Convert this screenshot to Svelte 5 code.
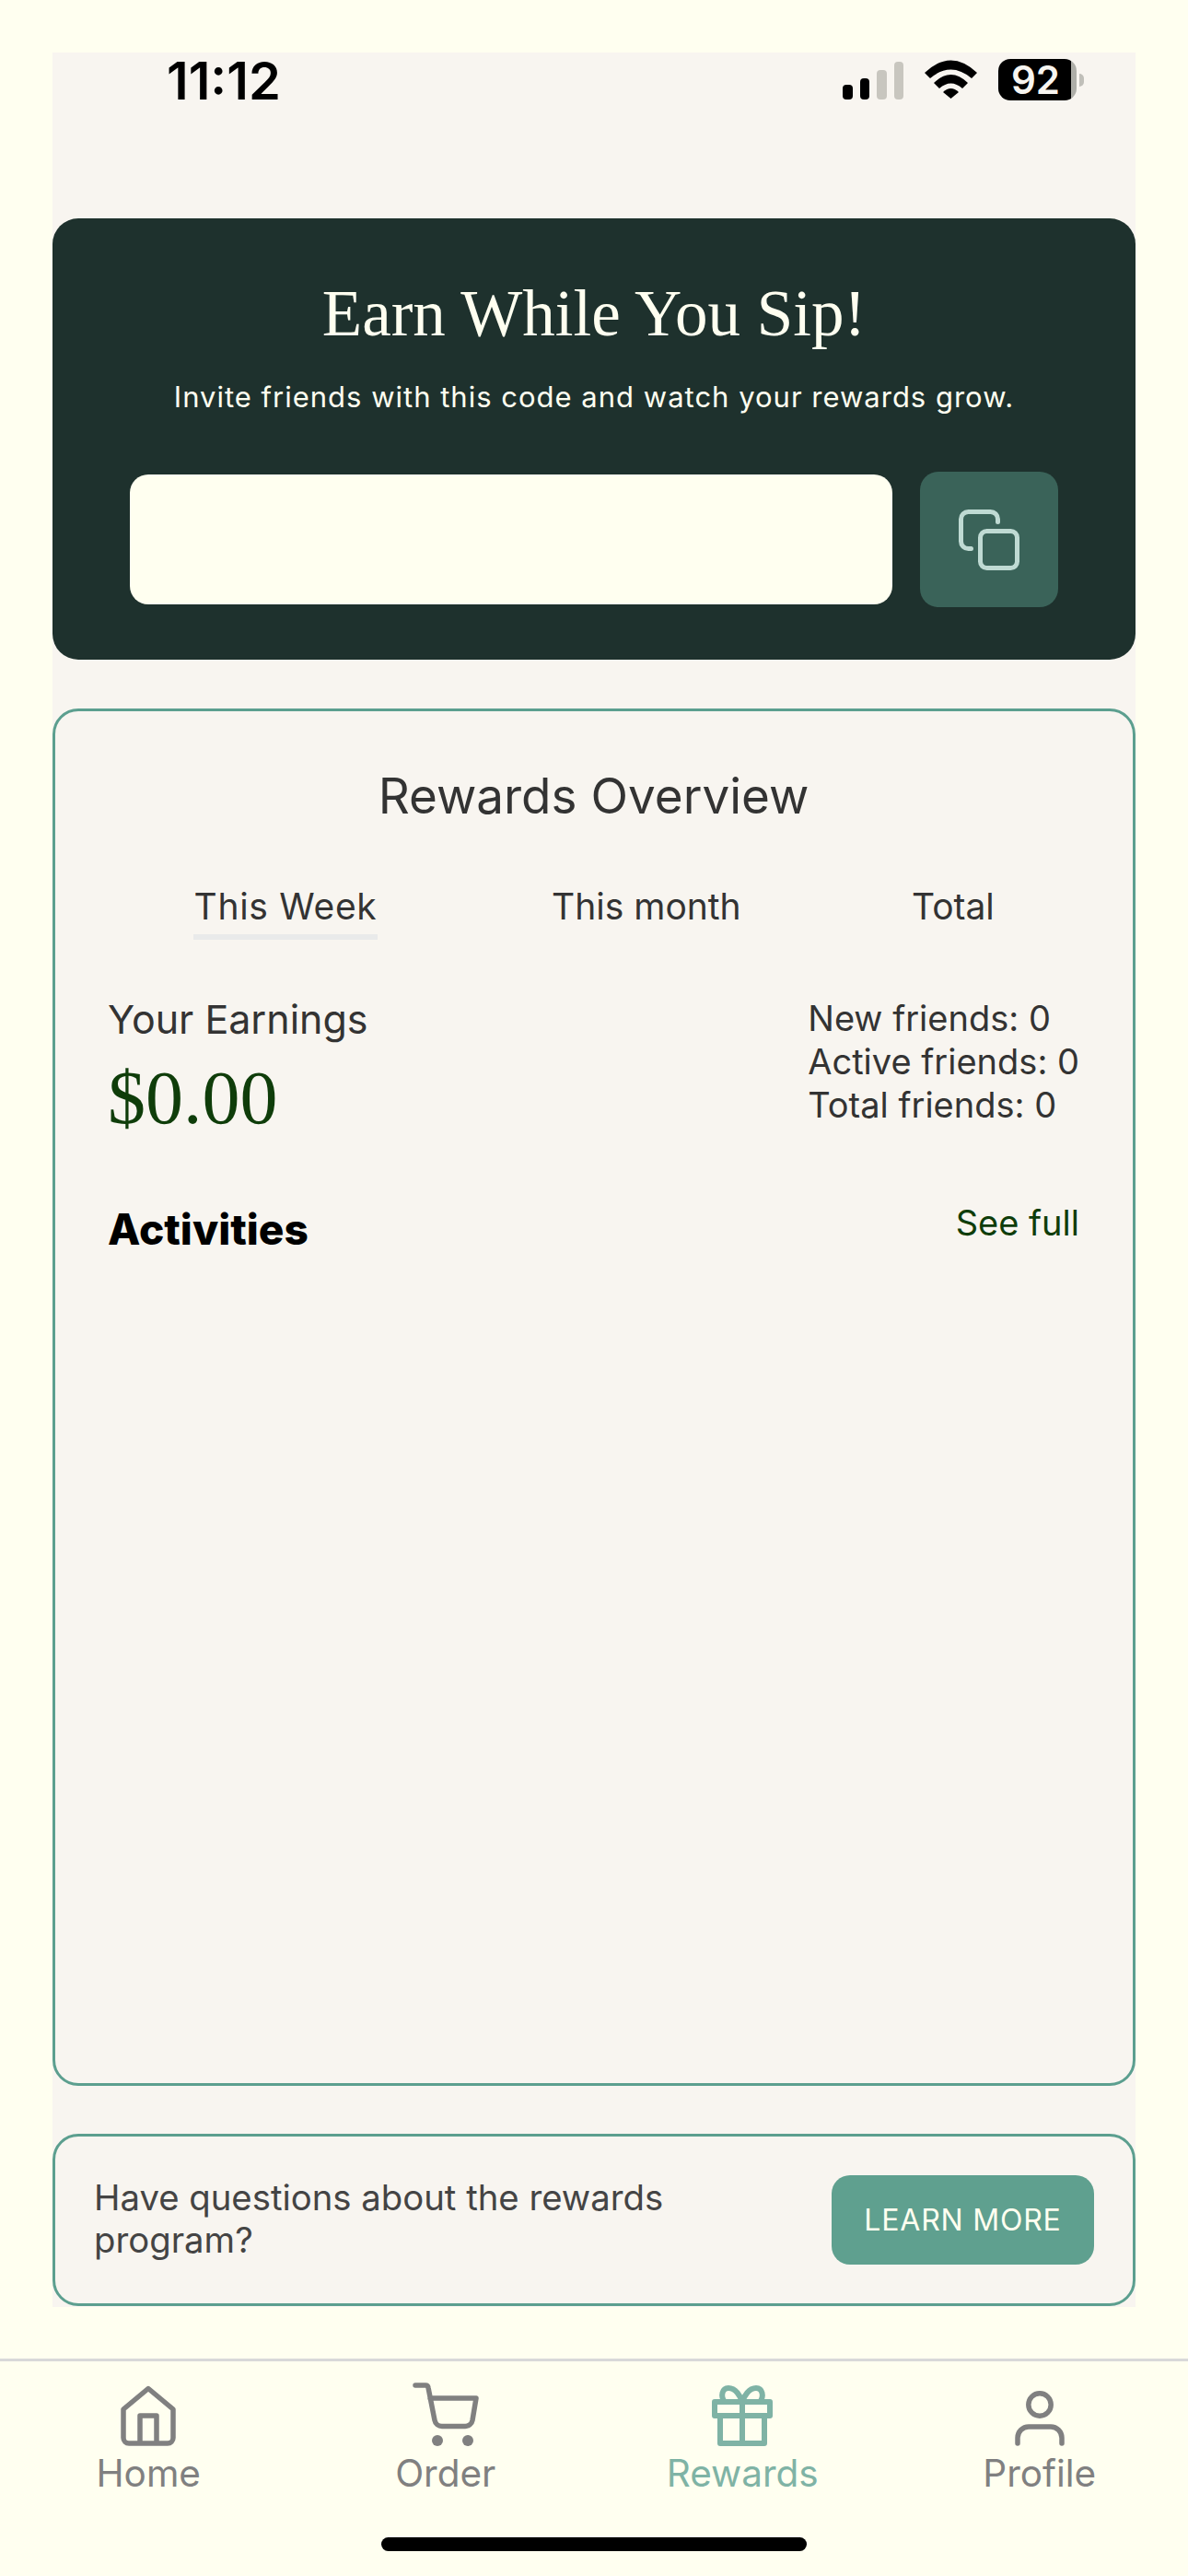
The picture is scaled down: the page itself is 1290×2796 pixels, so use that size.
<script>
  const tabs = ['This Week', 'This month', 'Total'];
  const friends = ['New friends: 0', 'Active friends: 0', 'Total friends: 0'];
</script>

<div class="page">
  <main class="sheet">
    <header class="status">
      <span class="time">11:12</span>
      <div class="indicators">
        <div class="signal">
          <i class="b1"></i><i class="b2"></i><i class="b3"></i><i class="b4"></i>
        </div>
        <svg class="wifi" width="57" height="42" viewBox="0 0 57 42">
          <path d="M0 14Q28.5-13 57 14L51 20Q28.5 1 6 20Z" />
          <path d="M10 25Q28.5 7 47 25L41 31Q28.5 20 16 31Z" />
          <path d="M20 35Q28.5 27 37 35L28.5 42Z" />
        </svg>
        <div class="battery"><div class="cell">92</div><div class="cap"></div></div>
      </div>
    </header>

    <section class="hero">
      <h1>Earn While You Sip!</h1>
      <p>Invite friends with this code and watch your rewards grow.</p>
      <div class="code-row">
        <div class="code"></div>
        <button class="copy" aria-label="Copy">
          <svg width="66" height="66" viewBox="0 0 66 66" fill="none" stroke="#bfdad3" stroke-width="5" stroke-linecap="round">
            <path d="M13.5 42.5h-3a8 8 0 0 1-8-8v-24a8 8 0 0 1 8-8h24a8 8 0 0 1 8 8v3" />
            <rect x="23.5" y="23.5" width="40" height="40" rx="7" />
          </svg>
        </button>
      </div>
    </section>

    <section class="overview">
      <h2>Rewards Overview</h2>
      <div class="tabs">
        {#each tabs as tab, i}
          <span class="tab" class:active={i === 0}>{tab}</span>
        {/each}
      </div>
      <div class="stats">
        <div class="earn">
          <div class="earn-label">Your Earnings</div>
          <div class="amount">$0.00</div>
        </div>
        <div class="friends">
          {#each friends as f}<div>{f}</div>{/each}
        </div>
      </div>
      <div class="activities">
        <h3>Activities</h3>
        <a href="#full">See full</a>
      </div>
    </section>

    <section class="question">
      <p>Have questions about the rewards program?</p>
      <button class="learn">LEARN MORE</button>
    </section>
  </main>

  <nav class="nav">
    <div class="item">
      <svg width="60" height="66" viewBox="0 0 60 66" fill="none" stroke="currentColor" stroke-width="5.5" stroke-linejoin="round">
        <path d="M3 26 30 3.5 57 26V57a6 6 0 0 1-6 6H9a6 6 0 0 1-6-6Z" />
        <path d="M21 63V33H39V63" />
      </svg>
      <span>Home</span>
    </div>
    <div class="item">
      <svg width="72" height="69" viewBox="0 0 72 69" fill="none" stroke="currentColor" stroke-width="5.5" stroke-linecap="round" stroke-linejoin="round">
        <path d="M3 3H14a3 3 0 0 1 3 2.5L24 41a8 8 0 0 0 8 6.5H57a8 8 0 0 0 8-6.5L69 17H19" />
        <circle cx="27" cy="63" r="6" fill="currentColor" stroke="none" />
        <circle cx="60" cy="63" r="6" fill="currentColor" stroke="none" />
      </svg>
      <span>Order</span>
    </div>
    <div class="item on">
      <svg width="66" height="66" viewBox="0 0 66 66" fill="none" stroke="currentColor" stroke-width="6" stroke-linejoin="round">
        <path d="M14 18C9 12 11 3 18 3 26 3 31 12 33 18 35 12 40 3 48 3 55 3 57 12 52 18" />
        <rect x="3" y="18" width="60" height="15" />
        <path d="M9 33V63H57V33M33 18V63" />
      </svg>
      <span>Rewards</span>
    </div>
    <div class="item">
      <svg width="54" height="60" viewBox="0 0 54 60" fill="none" stroke="currentColor" stroke-width="5.5" stroke-linecap="round">
        <circle cx="27" cy="15" r="12.2" />
        <path d="M3 57V51A12 12 0 0 1 15 39H39A12 12 0 0 1 51 51V57" />
      </svg>
      <span>Profile</span>
    </div>
  </nav>
  <div class="home-bar"></div>
</div>

<style>
  :global(body) { margin: 0; background: #fffff0; }
  .page {
    width: 1290px; height: 2796px; box-sizing: border-box; padding-top: 57px;
    background: #fffff0; font-family: Inter, sans-serif; display: flex; flex-direction: column;
    overflow: hidden;
  }
  .sheet { margin: 0 57px; width: 1176px; height: 2447px; background: #f8f5f0; display: flex; flex-direction: column; }

  .status { height: 180px; display: flex; justify-content: space-between; align-items: flex-start; flex: none; }
  .time { margin: -1px 0 0 124px; font-size: 56px; font-weight: 600; line-height: 64px; color: #000; }
  .indicators { display: flex; align-items: flex-start; margin: 7px 56px 0 0; }
  .signal { display: flex; align-items: flex-end; gap: 8px; height: 42px; margin-top: 2px; }
  .signal i { display: block; width: 10.5px; border-radius: 4px; background: #000; }
  .signal .b1 { height: 16px; }
  .signal .b2 { height: 23px; }
  .signal .b3 { height: 32px; background: #c8c6bf; }
  .signal .b4 { height: 41px; background: #c8c6bf; }
  .wifi { margin: 1px 0 0 23px; fill: #000; }
  .battery { display: flex; align-items: center; margin-left: 23px; }
  .cell {
    width: 85px; height: 45px; box-sizing: border-box; border-radius: 13px; background: linear-gradient(90deg, #000 93%, #aeaea8 93%);
    color: #f7f5f0; font-size: 42px; font-weight: 600; line-height: 45px; text-align: center; padding-right: 4px;
  }
  .cap { width: 5px; height: 14px; margin-left: 3px; border-radius: 0 6px 6px 0; background: #c0bfb9; }

  .hero { height: 479px; flex: none; box-sizing: border-box; background: #1e312d; border-radius: 28px; padding-top: 62px; text-align: center; color: #fffff0; }
  h1 { margin: 0; font: 400 71px/82px "Liberation Serif", serif; color: #fffff0; }
  .hero p { margin: 30px 0 0; font-size: 31px; line-height: 40px; letter-spacing: 1px; }
  .code-row { display: flex; align-items: center; gap: 30px; margin: 61px 84px 0; }
  .code { width: 828px; height: 141px; background: #fffff0; border-radius: 20px; }
  .copy { width: 150px; height: 147px; display: flex; align-items: center; justify-content: center; border: 0; padding: 0; background: #3a6359; border-radius: 20px; }

  .overview { height: 1495px; flex: none; box-sizing: border-box; margin-top: 53px; border: 3px solid #5c9f8f; border-radius: 28px; padding: 0 58px 0 57px; color: #333; }
  h2 { margin: 59px 0 0; font-size: 53px; font-weight: 400; line-height: 66px; text-align: center; color: #333; }
  .tabs { display: flex; margin-top: 56px; height: 70px; position: relative; }
  .tab { position: absolute; top: 0; font-size: 39px; line-height: 61px; color: #333; }
  .tab:nth-child(1) { left: 93px; border-bottom: 6px solid #e9eaea; width: 200px; text-align: center; letter-spacing: 0.7px; }
  .tab:nth-child(2) { left: 482px; }
  .tab:nth-child(3) { left: 873px; }
  .stats { display: flex; justify-content: space-between; margin-top: 45px; }
  .earn-label { font-size: 43px; line-height: 52px; margin-top: 12px; color: #333; }
  .amount { margin-top: 16px; font: 400 82px/88px "Liberation Serif", serif; color: #0f3d0a; }
  .friends { font-size: 38px; line-height: 47px; color: #333; margin: 14px 0 0 0; }
  .activities { display: flex; justify-content: space-between; align-items: flex-start; margin-top: 70px; }
  h3 { margin: 0; font-size: 46px; font-weight: 800; line-height: 56px; color: #000; }
  .activities a { font-size: 38px; line-height: 48px; color: #0f3d0a; text-decoration: none; margin-top: -3px; }

  .question { height: 187px; flex: none; box-sizing: border-box; margin-top: 52px; border: 3px solid #5c9f8f; border-radius: 28px; display: flex; align-items: center; justify-content: space-between; padding: 0 42px; }
  .question p { margin: 0 0 4px; width: 700px; font-size: 38.3px; line-height: 46px; color: #444; }
  .learn { width: 285px; height: 97px; border: 0; border-radius: 20px; background: #5fa08f; color: #fffff0; font: 400 32px Inter, sans-serif; letter-spacing: 0.8px; padding: 0; }

  .nav { margin-top: 56px; height: 180px; flex: none; box-sizing: border-box; border-top: 3px solid #d9d9d9; display: grid; grid-template-columns: repeat(4, 322.5px); color: #808080; padding-top: 25px; }
  .item { display: flex; flex-direction: column; align-items: center; height: 120px; justify-content: flex-end; }
  .item svg { flex: none; }
  .item span { font-size: 40.5px; line-height: 46px; margin-top: 7px; }
  .item.on { color: #7fb3a5; }
  .home-bar { width: 462px; height: 15px; margin: 14px auto 0; border-radius: 8px; background: #000; flex: none; }
</style>
